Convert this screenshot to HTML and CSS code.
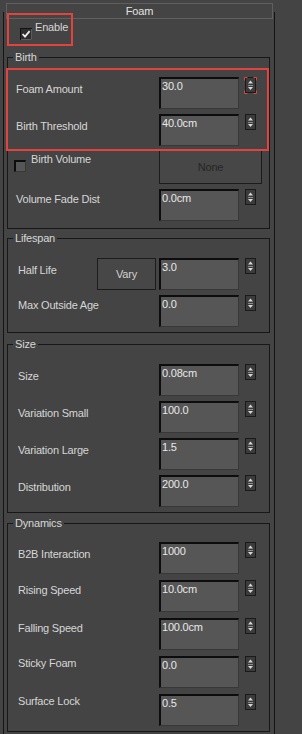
FILE: index.html
```html
<!DOCTYPE html>
<html lang="en">
	<head>
		<meta charset="UTF-8" />
		<meta name="viewport" content="width=device-width, initial-scale=1.0" />
		<title>Foam</title>
		<link rel="stylesheet" href="styles.css">
	</head>
	<body>
		<svg class="defs" width="0" height="0">
			<symbol id="spin" viewBox="0 0 11 16">
				<rect x="0.5" y="0.5" width="10" height="15" fill="#3b3b3b" stroke="#1a1a1a" />
				<polygon points="3,6.5 8,6.5 5.5,3.5" fill="#d8d8d8" />
				<path d="M3 8.5H8" stroke="#8a8a8a" />
				<polygon points="3,10 8,10 5.5,13" fill="#d8d8d8" />
			</symbol>
			<symbol id="tick" viewBox="0 0 12 12">
				<rect x="0.5" y="0.5" width="11" height="11" fill="#2e2e2e" stroke="#121212" />
				<path d="M11.5 1V11.5H1" stroke="#5c5c5c" fill="none" />
				<polyline points="2.6,6 5,8.6 9.6,3.2" fill="none" stroke="#efefef" stroke-width="1.8" />
			</symbol>
		</svg>

		<div class="rollout">
			<div class="rollout-title">Foam</div>

			<label class="enable">
				<svg class="check"><use href="#tick" /></svg>
				<span>Enable</span>
			</label>

			<fieldset class="group birth">
				<legend>Birth</legend>
				<div class="rows">
					<div class="row">
						<span class="lbl">Foam Amount</span>
						<input class="num" type="text" value="30.0" />
						<svg class="spin"><use href="#spin" /></svg>
					</div>
					<div class="row">
						<span class="lbl">Birth Threshold</span>
						<input class="num" type="text" value="40.0cm" />
						<svg class="spin"><use href="#spin" /></svg>
					</div>
					<div class="row pick">
						<span class="box"></span>
						<span class="lbl">Birth Volume</span>
						<button class="btn none">None</button>
					</div>
					<div class="row">
						<span class="lbl hi">Volume Fade Dist</span>
						<input class="num" type="text" value="0.0cm" />
						<svg class="spin"><use href="#spin" /></svg>
					</div>
				</div>
			</fieldset>

			<fieldset class="group life">
				<legend>Lifespan</legend>
				<div class="rows">
					<div class="row">
						<span class="lbl">Half Life</span>
						<button class="btn vary">Vary</button>
						<input class="num" type="text" value="3.0" />
						<svg class="spin"><use href="#spin" /></svg>
					</div>
					<div class="row">
						<span class="lbl hi">Max Outside Age</span>
						<input class="num" type="text" value="0.0" />
						<svg class="spin"><use href="#spin" /></svg>
					</div>
				</div>
			</fieldset>

			<fieldset class="group size">
				<legend>Size</legend>
				<div class="rows">
					<div class="row">
						<span class="lbl">Size</span>
						<input class="num" type="text" value="0.08cm" />
						<svg class="spin"><use href="#spin" /></svg>
					</div>
					<div class="row">
						<span class="lbl">Variation Small</span>
						<input class="num" type="text" value="100.0" />
						<svg class="spin"><use href="#spin" /></svg>
					</div>
					<div class="row">
						<span class="lbl">Variation Large</span>
						<input class="num" type="text" value="1.5" />
						<svg class="spin"><use href="#spin" /></svg>
					</div>
					<div class="row">
						<span class="lbl">Distribution</span>
						<input class="num" type="text" value="200.0" />
						<svg class="spin"><use href="#spin" /></svg>
					</div>
				</div>
			</fieldset>

			<fieldset class="group dyn">
				<legend>Dynamics</legend>
				<div class="rows">
					<div class="row">
						<span class="lbl">B2B Interaction</span>
						<input class="num" type="text" value="1000" />
						<svg class="spin"><use href="#spin" /></svg>
					</div>
					<div class="row">
						<span class="lbl hi">Rising Speed</span>
						<input class="num" type="text" value="10.0cm" />
						<svg class="spin"><use href="#spin" /></svg>
					</div>
					<div class="row">
						<span class="lbl hi">Falling Speed</span>
						<input class="num" type="text" value="100.0cm" />
						<svg class="spin"><use href="#spin" /></svg>
					</div>
					<div class="row">
						<span class="lbl hi2">Sticky Foam</span>
						<input class="num" type="text" value="0.0" />
						<svg class="spin"><use href="#spin" /></svg>
					</div>
					<div class="row">
						<span class="lbl hi2">Surface Lock</span>
						<input class="num" type="text" value="0.5" />
						<svg class="spin"><use href="#spin" /></svg>
					</div>
				</div>
			</fieldset>
		</div>

		<!-- red annotation marks -->
		<div class="mark mark-enable"></div>
		<div class="mark mark-birth"></div>
		<svg class="mark-spin" viewBox="0 0 13 17">
			<path d="M0.5 3.5V0.5H3.5M9.5 0.5H12.5V3.5M12.5 13.5V16.5H9.5M3.5 16.5H0.5V13.5" fill="none" stroke="#e3433e" />
		</svg>
	</body>
</html>
```

FILE: styles.css
```css
* {
	box-sizing: border-box;
}
body {
	margin: 0;
	background-color: #444444;
	color: #d6d6d6;
	font-family: "Liberation Sans", Arial, sans-serif;
	font-size: 11px;
	line-height: 13px;
	letter-spacing: -0.2px;
}
.defs {
	position: absolute;
	width: 0;
	height: 0;
	overflow: hidden;
}

.rollout {
	display: flex;
	flex-direction: column;
	margin: 12px 27px 0 3px;
	border-left: 1px solid #151515;
	border-right: 1px solid #151515;
	padding-bottom: 12px;
}
.rollout-title {
	margin: -9px 1px 0 2px;
	height: 16px;
	line-height: 14px;
	border: 1px solid #5f5f5f;
	background-color: #444444;
	color: #e2e2e2;
	text-align: center;
}

.enable {
	display: flex;
	align-items: flex-start;
	gap: 3px;
	height: 19px;
	margin-top: 2px;
	padding-left: 16px;
}
.check {
	width: 12px;
	height: 12px;
	margin-top: 7px;
	flex-shrink: 0;
}

.group {
	margin: 0 4px 0 3px;
	padding: 13px 0 5px;
	border: 1px solid #181818;
	min-width: 0;
}
.group legend {
	margin-left: 5px;
	padding: 0 2px;
	line-height: 13px;
}
.rows {
	display: flex;
	flex-direction: column;
	gap: 5px;
}
.birth {
	margin-top: 11px;
	padding-bottom: 7px;
}
.life {
	margin-top: 3px;
}
.size {
	margin-top: 5px;
}
.dyn {
	margin-top: 4px;
	padding-top: 12px;
}
.dyn .rows {
	gap: 6px;
}

.row {
	display: flex;
	align-items: flex-start;
	height: 32px;
	padding: 0 13px 0 10px;
}
.birth .row {
	padding-left: 8px;
}
.lbl {
	flex: 1;
	padding-top: 6px;
	white-space: nowrap;
}
.lbl.hi {
	padding-top: 4px;
}
.lbl.hi2 {
	padding-top: 1px;
}

.num {
	width: 80px;
	height: 32px;
	margin: 0;
	padding: 0 2px 16px 1px;
	border-style: solid;
	border-width: 2px 1px 1px 2px;
	border-color: #0d0d0d #383838 #383838 #0d0d0d;
	background-color: #565656;
	color: #e8e8e8;
	font: inherit;
	letter-spacing: inherit;
	outline: none;
	flex-shrink: 0;
}
.spin {
	width: 11px;
	height: 16px;
	margin-left: 6px;
	flex-shrink: 0;
}

.row.pick {
	height: 34px;
	margin-top: -1px;
	padding-left: 6px;
	padding-right: 7px;
}
.box {
	width: 12px;
	height: 12px;
	margin-top: 10px;
	border-style: solid;
	border-width: 2px 1px 1px 2px;
	border-color: #0d0d0d #383838 #383838 #0d0d0d;
	background-color: #565656;
	flex-shrink: 0;
}
.pick .lbl {
	margin-left: 5px;
	padding-top: 3px;
}

.btn {
	margin: 0;
	padding: 0;
	background-color: #474747;
	border: 1px solid #1c1c1c;
	color: #d0d0d0;
	font: inherit;
	letter-spacing: inherit;
	flex-shrink: 0;
}
.btn.none {
	width: 103px;
	height: 34px;
	color: #262626;
}
.btn.vary {
	width: 59px;
	height: 32px;
	margin-right: 3px;
}

.mark {
	position: absolute;
	border: 2px solid #e3433e;
}
.mark-enable {
	left: 7px;
	top: 13px;
	width: 66px;
	height: 33px;
}
.mark-birth {
	left: 6px;
	top: 68px;
	width: 263px;
	height: 83px;
}
.mark-spin {
	position: absolute;
	left: 244px;
	top: 77px;
	width: 13px;
	height: 17px;
}
```
